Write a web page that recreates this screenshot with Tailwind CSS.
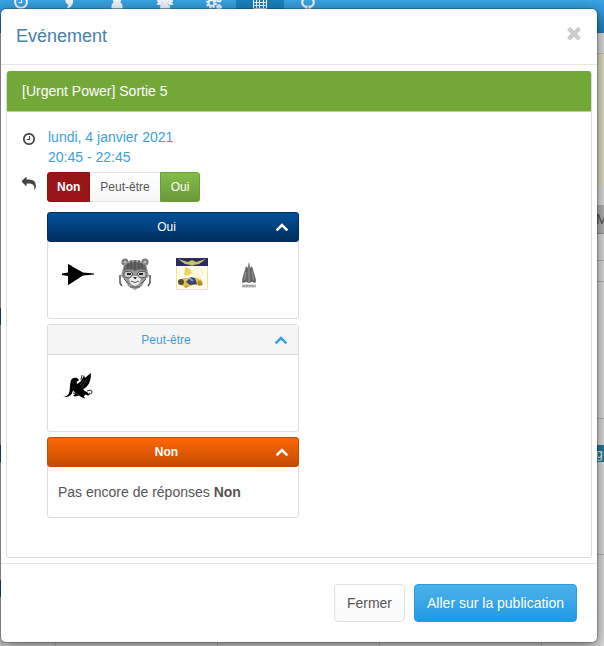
<!DOCTYPE html>
<html lang="fr">
  <head>
    <meta charset="UTF-8" />
    <meta name="viewport" content="width=device-width, initial-scale=1.0" />
    <title>Evénement</title>
    <script src="https://cdn.jsdelivr.net/npm/@tailwindcss/browser@4"></script>
  </head>
  <body class="relative min-h-screen overflow-hidden bg-[#e2e2e2] font-['Liberation_Sans',Arial,sans-serif] text-sm leading-5 text-[#555]">
    <svg class="hidden">
      <symbol id="clock" viewBox="0 0 1792 1792">
        <path d="M1024 544v448q0 14-9 23t-23 9h-320q-14 0-23-9t-9-23v-64q0-14 9-23t23-9h224v-352q0-14 9-23t23-9h64q14 0 23 9t9 23zm416 352q0-148-73-273t-198-198-273-73-273 73-198 198-73 273 73 273 198 198 273 73 273-73 198-198 73-273zm224 0q0 209-103 385.5t-279.5 279.5-385.5 103-385.5-103-279.5-279.5-103-385.5 103-385.5 279.5-279.5 385.5-103 385.5 103 279.5 279.5 103 385.5z" />
      </symbol>
      <symbol id="chevron-up" viewBox="0 0 14 14">
        <path d="M2.500 9.500L7 5l4.500 4.500" fill="none" stroke="currentColor" stroke-width="2.500" stroke-linecap="square" />
      </symbol>
    </svg>

    <!-- Page behind the dialog -->
    <div class="absolute inset-0 flex flex-col" aria-hidden="true">
      <nav class="flex h-[33px] shrink-0 items-start overflow-hidden bg-linear-to-b from-[#3aa5e4] to-[#1d84c4] text-[#f0f5f9]">
        <a href="#" class="flex h-full w-[42px] justify-center"><svg class="-mt-1.5 size-4" fill="currentColor"><use href="#clock" /></svg></a>
        <a href="#" class="flex h-full w-[54px] justify-center">
          <svg class="-mt-1 size-4" viewBox="0 0 16 16" fill="currentColor"><path d="M4 1h8v5c0 3-2 5-5 6.500l-1-1c1-1 1.500-2 1-3C5 8 4 5 4 1z" /></svg>
        </a>
        <a href="#" class="flex h-full w-[42px] justify-center">
          <svg class="-mt-1 size-4" viewBox="0 0 16 16" fill="currentColor"><circle cx="8" cy="4" r="4" /><path d="M2.500 12.500C2 9 3 7 5 6.500h6c2 .5 3 2.500 2.500 6z" /></svg>
        </a>
        <a href="#" class="flex h-full w-[54px] justify-center">
          <svg class="-mt-1 h-4 w-[18px]" viewBox="0 0 18 16" fill="currentColor"><circle cx="3.500" cy="4" r="2.500" /><circle cx="14.500" cy="4" r="2.500" /><path d="M1 9c0-2 .5-3 2-3h3v3zM17 9c0-2-.5-3-2-3h-3v3zM4 12.500C4 9 5 8 6.500 8h5C13 8 14 9 14 12.500z" /><circle cx="9" cy="5" r="3.500" /></svg>
        </a>
        <a href="#" class="flex h-full w-11 justify-center">
          <svg class="-mt-1 size-4" viewBox="0 0 16 16" fill="none" stroke="currentColor" stroke-width="2">
            <circle cx="5.500" cy="7" r="3" /><circle cx="13" cy="4" r="1.500" /><circle cx="13" cy="11" r="1.500" />
            <circle cx="5.500" cy="7" r="4.500" stroke-dasharray="2 1.500" /><circle cx="13" cy="11" r="2.500" stroke-width="1" stroke-dasharray="1 1" />
          </svg>
        </a>
        <a href="#" class="flex h-full w-12 justify-center bg-[#1a80bd]">
          <svg class="-mt-1 size-4" viewBox="0 0 16 16" fill="none" stroke="currentColor"><path d="M1.500 0v12.500h13V0M1 3.500h14M1 6.500h14M1 9.500h14M4.500 3v9M7.500 3v9M11.500 3v9" /></svg>
        </a>
        <a href="#" class="flex h-full w-12 justify-center">
          <svg class="-mt-1 size-4" viewBox="0 0 16 16" fill="none" stroke="currentColor" stroke-width="2"><path d="M6.500 13V9.500M9.500 13V9.500M6 11C1 9 1 3 6 2M10 11C15 9 15 3 10 2" /></svg>
        </a>
      </nav>
      <div class="flex grow">
        <div class="flex w-1 flex-col bg-[#d5d5d5]">
          <div class="mt-[275px] h-[17px] bg-[#1e5f7a]"></div>
          <div class="mt-[120px] h-[17px] bg-[#1e5f7a]"></div>
          <div class="mt-[118px] h-[17px] bg-[#1e5f7a]"></div>
        </div>
        <div class="grid grow grid-cols-[52px_162px_162px_162px_1fr]">
          <div class="border-r border-[#c4c4c4]"></div>
          <div class="border-r border-[#c4c4c4]"></div>
          <div class="border-r border-[#c4c4c4]"></div>
          <div class="border-r border-[#c4c4c4]"></div>
        </div>
        <div class="flex w-2 flex-col overflow-hidden">
          <div class="mt-5 h-[132px] border-t border-[#ccc9a5] bg-[#e6e3cb]"></div>
          <div class="mt-5 flex h-[29px] items-center border-b border-[#999] bg-[#b8b8b8] text-[#555]">M</div>
          <div class="h-[27px] border-b border-[#bbb]"></div>
          <div class="h-[21px] border-b border-[#bbb]"></div>
          <div class="h-[137px] border-b border-[#bbb]"></div>
          <div class="mt-[26px] flex h-[17px] items-center bg-[#237da0] text-xs text-white">g</div>
          <div class="h-[93px] border-b border-[#bbb]"></div>
        </div>
      </div>
    </div>

    <!-- Event dialog -->
    <div class="relative pt-2 pr-1.5 pb-1">
      <section role="dialog" aria-labelledby="dialogTitle" class="rounded-md border border-black/20 bg-white bg-clip-padding shadow-[0_5px_15px_rgba(0,0,0,0.5)]">
        <header class="flex h-14 items-center justify-between border-b border-[#e5e5e5] px-[15px]">
          <h1 id="dialogTitle" class="pb-0.5 text-lg text-[#4581a8]">Evénement</h1>
          <button type="button" aria-label="Fermer la fenêtre" class="-mr-0.5 pb-2 text-[#ccc]">
            <svg class="size-5" viewBox="0 0 1792 1792" fill="currentColor"><path d="M1490 1322q0 40-28 68l-136 136q-28 28-68 28t-68-28l-294-294-294 294q-28 28-68 28t-68-28l-136-136q-28-28-28-68t28-68l294-294-294-294q-28-28-28-68t28-68l136-136q28-28 68-28t68 28l294 294 294-294q28-28 68-28t68 28l136 136q28 28 28 68t-28 68l-294 294 294 294q28 28 28 68z" /></svg>
          </button>
        </header>

        <div class="px-[5px] pt-1.5 pb-[5px]">
          <article class="rounded-[3px] border border-[#ddd] bg-white">
            <h2 class="-mt-px rounded-t-[3px] border-b border-[#b5d68f] bg-[#73a839] px-[15px] py-2.5 text-white">[Urgent Power] Sortie 5</h2>
            <div class="grid grid-cols-[14px_1fr] gap-x-[11px] gap-y-[5px] px-[15px] pt-[15px] pb-[39px]">
              <svg class="mt-[5px] size-3.5 fill-[#444]"><use href="#clock" /></svg>
              <p class="pl-px text-[#3d9fdc]">lundi, 4 janvier 2021<br />20:45 - 22:45</p>

              <svg class="mt-[5px] size-3.5 fill-[#444]" viewBox="0 0 1792 1792"><path d="M1792 1120q0 166-127 451-3 7-10.500 24t-13.500 30-13 22q-12 17-28 17-15 0-23.500-10t-8.500-25q0-9 2.500-26.500t2.500-23.500q5-68 5-123 0-112-19.500-200.500t-54-153.500-89-112-115-78-142-49.500-163.500-26-183-7.500h-224v256q0 26-19 45t-45 19-45-19l-512-512q-19-19-19-45t19-45l512-512q19-19 45-19t45 19 19 45v256h224q713 0 875 403 53 134 53 333z" /></svg>
              <div>
                <div class="flex text-xs">
                  <button type="button" class="h-[30px] rounded-l-[3px] border border-[#8c1014] bg-[#9a1519] px-[9px] font-bold text-white">Non</button>
                  <button type="button" class="h-[30px] border-y border-[#e4e4e4] bg-linear-to-b from-white to-[#f7f7f7] px-2.5">Peut-être</button>
                  <button type="button" class="h-[30px] rounded-r-[3px] border border-[#6c9e36] bg-linear-to-b from-[#84bd48] to-[#69993a] px-2.5 text-white">Oui</button>
                </div>

                <div class="mt-2.5 flex max-w-[252px] flex-col gap-[5px]">
                  <section class="rounded-[3px] border border-[#ddd]">
                    <button type="button" class="-mx-px -mt-px flex h-[30px] w-[calc(100%+2px)] items-center rounded-[3px] border border-[#002d5c] bg-linear-to-b from-[#04519b] to-[#002f5e] pr-[9px] pl-2.5 text-xs text-white">
                      <span class="grow">Oui</span>
                      <svg class="size-3.5"><use href="#chevron-up" /></svg>
                    </button>
                    <div class="flex gap-[25px] px-3.5 pt-4 pb-7">
                      <svg class="size-8" viewBox="0 0 32 32">
                        <path d="M6 6q3 1 5 3l10 5.500 11 1v1l-11 1L11 24q-3 2-5 3v-9l-6-1v-1.500l6-1z" />
                      </svg>
                      <svg class="size-8" viewBox="0 0 32 32">
                        <g fill="#777"><circle cx="6" cy="4" r="3.500" /><circle cx="26" cy="4" r="3.500" /></g>
                        <g fill="#bbb"><circle cx="6" cy="4" r="1.500" /><circle cx="26" cy="4" r="1.500" /></g>
                        <path d="M5 6Q16-2 27 6l3 12-4 4-3 6-7 4-7-4-3-6-4-4z" fill="#999" />
                        <path d="M6 7q10-6 20 0l2 6q-7-3-12 0-5-3-12 0z" fill="#666" />
                        <path d="M12 2v9M16 2v10M20 2v9M9 5v5M23 5v5" stroke="#444" fill="none" />
                        <path d="M1 17v8l2 3M31 17v8l-2 3" stroke="#555" stroke-width="1.500" fill="none" />
                        <path d="M5 14l6-1 3 3-3 4-6-1zM27 14l-6-1-3 3 3 4 6-1z" fill="#ccc" stroke="#555" />
                        <path d="M8 16h4M20 16h4" stroke="#222" stroke-width="2" />
                        <path d="M10 21l4-3h4l4 3-2 5-4 2-4-2z" fill="#eee" />
                        <path d="M14 19h4l-2 2.500z" fill="#222" />
                        <path d="M12 23q4 3 8 0M5 21l5 5M27 21l-5 5M11 29h10" stroke="#555" fill="none" />
                      </svg>
                      <svg class="size-8" viewBox="0 0 32 32">
                        <path d="M.5.500h31v31H.5z" fill="#fffef0" stroke="#eeea82" />
                        <path d="M0 0h32v8H0z" fill="#292b62" />
                        <path d="M2 1l10 3 4-2 4 2 10-3-7 5-5 1-2 1-2-1-5-1z" fill="#c9c460" />
                        <circle cx="22" cy="15" r="5" fill="#fffce0" stroke="#f3efbb" />
                        <path d="M9 9l5 2 2 4-4 3-4-1z" fill="#edd45a" />
                        <path d="M4 22q5-4 11-1l6-1 5 3v5l-8-1-8 2-6-2z" fill="#e3c04a" />
                        <circle cx="5" cy="24" r="3" fill="#554b3b" />
                        <path d="M10 24l5-5 4 1 2 6-7 1z" fill="#34457a" />
                        <path d="M13 20l4 3" stroke="#7e9bca" stroke-width="2" />
                        <circle cx="24" cy="25" r="2.500" fill="#b18732" />
                        <path d="M23 20l3 2v3" fill="#ead147" />
                        <path d="M8 29q2-3 5-1l-3 2z" fill="#c79830" />
                      </svg>
                      <svg class="size-8" viewBox="0 0 32 32">
                        <path d="M16 4l1.500 6 1.500-2 2 7 2 7-1 3-3-1-3 1-3-1-3 1-1-3 2-7 2-7 1.500 2z" fill="#666" />
                        <path d="M16 7v17M13 14l-1.500 8M19 13l1.500 9" stroke="#999" fill="none" />
                        <path d="M9 24l3-2M23 24l-3-2" stroke="#666" />
                        <path d="M9 28h14" stroke="#bbb" stroke-width="3" />
                        <path d="M10 28h12" stroke="#888" stroke-dasharray="2 1" />
                      </svg>
                    </div>
                  </section>

                  <section class="rounded-[3px] border border-[#ddd]">
                    <button type="button" class="flex h-[30px] w-full items-center border-b border-[#ddd] bg-[#f5f5f5] px-2.5 text-xs text-[#3d9fdc]">
                      <span class="grow">Peut-être</span>
                      <svg class="size-3.5"><use href="#chevron-up" /></svg>
                    </button>
                    <div class="px-3.5 pt-4 pb-7">
                      <svg class="size-8" viewBox="0 0 32 32">
                        <path d="M9 9q2-3 6-2l2 2-1 1q-2 0-1 3 2-1 4-3 2-3 3-6l1 3q2-2 6-5 0 8-3 12-2 3-5 4 2 3 4 3l3 3-2 .5-3-1-1 2 1 2-3-1-3-2-4 1-2-1 3-2-3-3q-1 4-3 5-2 2-7 1.500 5-1 6-4 1-3 1-8z" />
                        <path d="M19 9l1-5M25 20q5-2 5 1t-3 1M11 22l5 1" stroke="#222" fill="none" />
                        <path d="M18 14l4-5M20 16l5-8" stroke="#777" stroke-width=".5" fill="none" />
                      </svg>
                    </div>
                  </section>

                  <section class="rounded-[3px] border border-[#ddd]">
                    <button type="button" class="-mx-px -mt-px flex h-[30px] w-[calc(100%+2px)] items-center rounded-[3px] border border-[#c54b00] bg-linear-to-b from-[#ff6707] to-[#c44b00] pr-[9px] pl-2.5 text-xs font-bold text-white">
                      <span class="grow">Non</span>
                      <svg class="size-3.5"><use href="#chevron-up" /></svg>
                    </button>
                    <p class="px-2.5 py-[15px]">Pas encore de réponses <b>Non</b></p>
                  </section>
                </div>
              </div>
            </div>
          </article>
        </div>

        <footer class="flex justify-end gap-[9px] border-t border-[#e5e5e5] p-5">
          <button type="button" class="h-[38px] rounded border border-[#e2e2e2] bg-linear-to-b from-white to-[#f9f9f9] px-3">Fermer</button>
          <button type="button" class="h-[38px] rounded border border-[#2b9ade] bg-linear-to-b from-[#4cb2ea] to-[#1c9ae4] px-3 text-white">Aller sur la publication</button>
        </footer>
      </section>
    </div>
  </body>
</html>
